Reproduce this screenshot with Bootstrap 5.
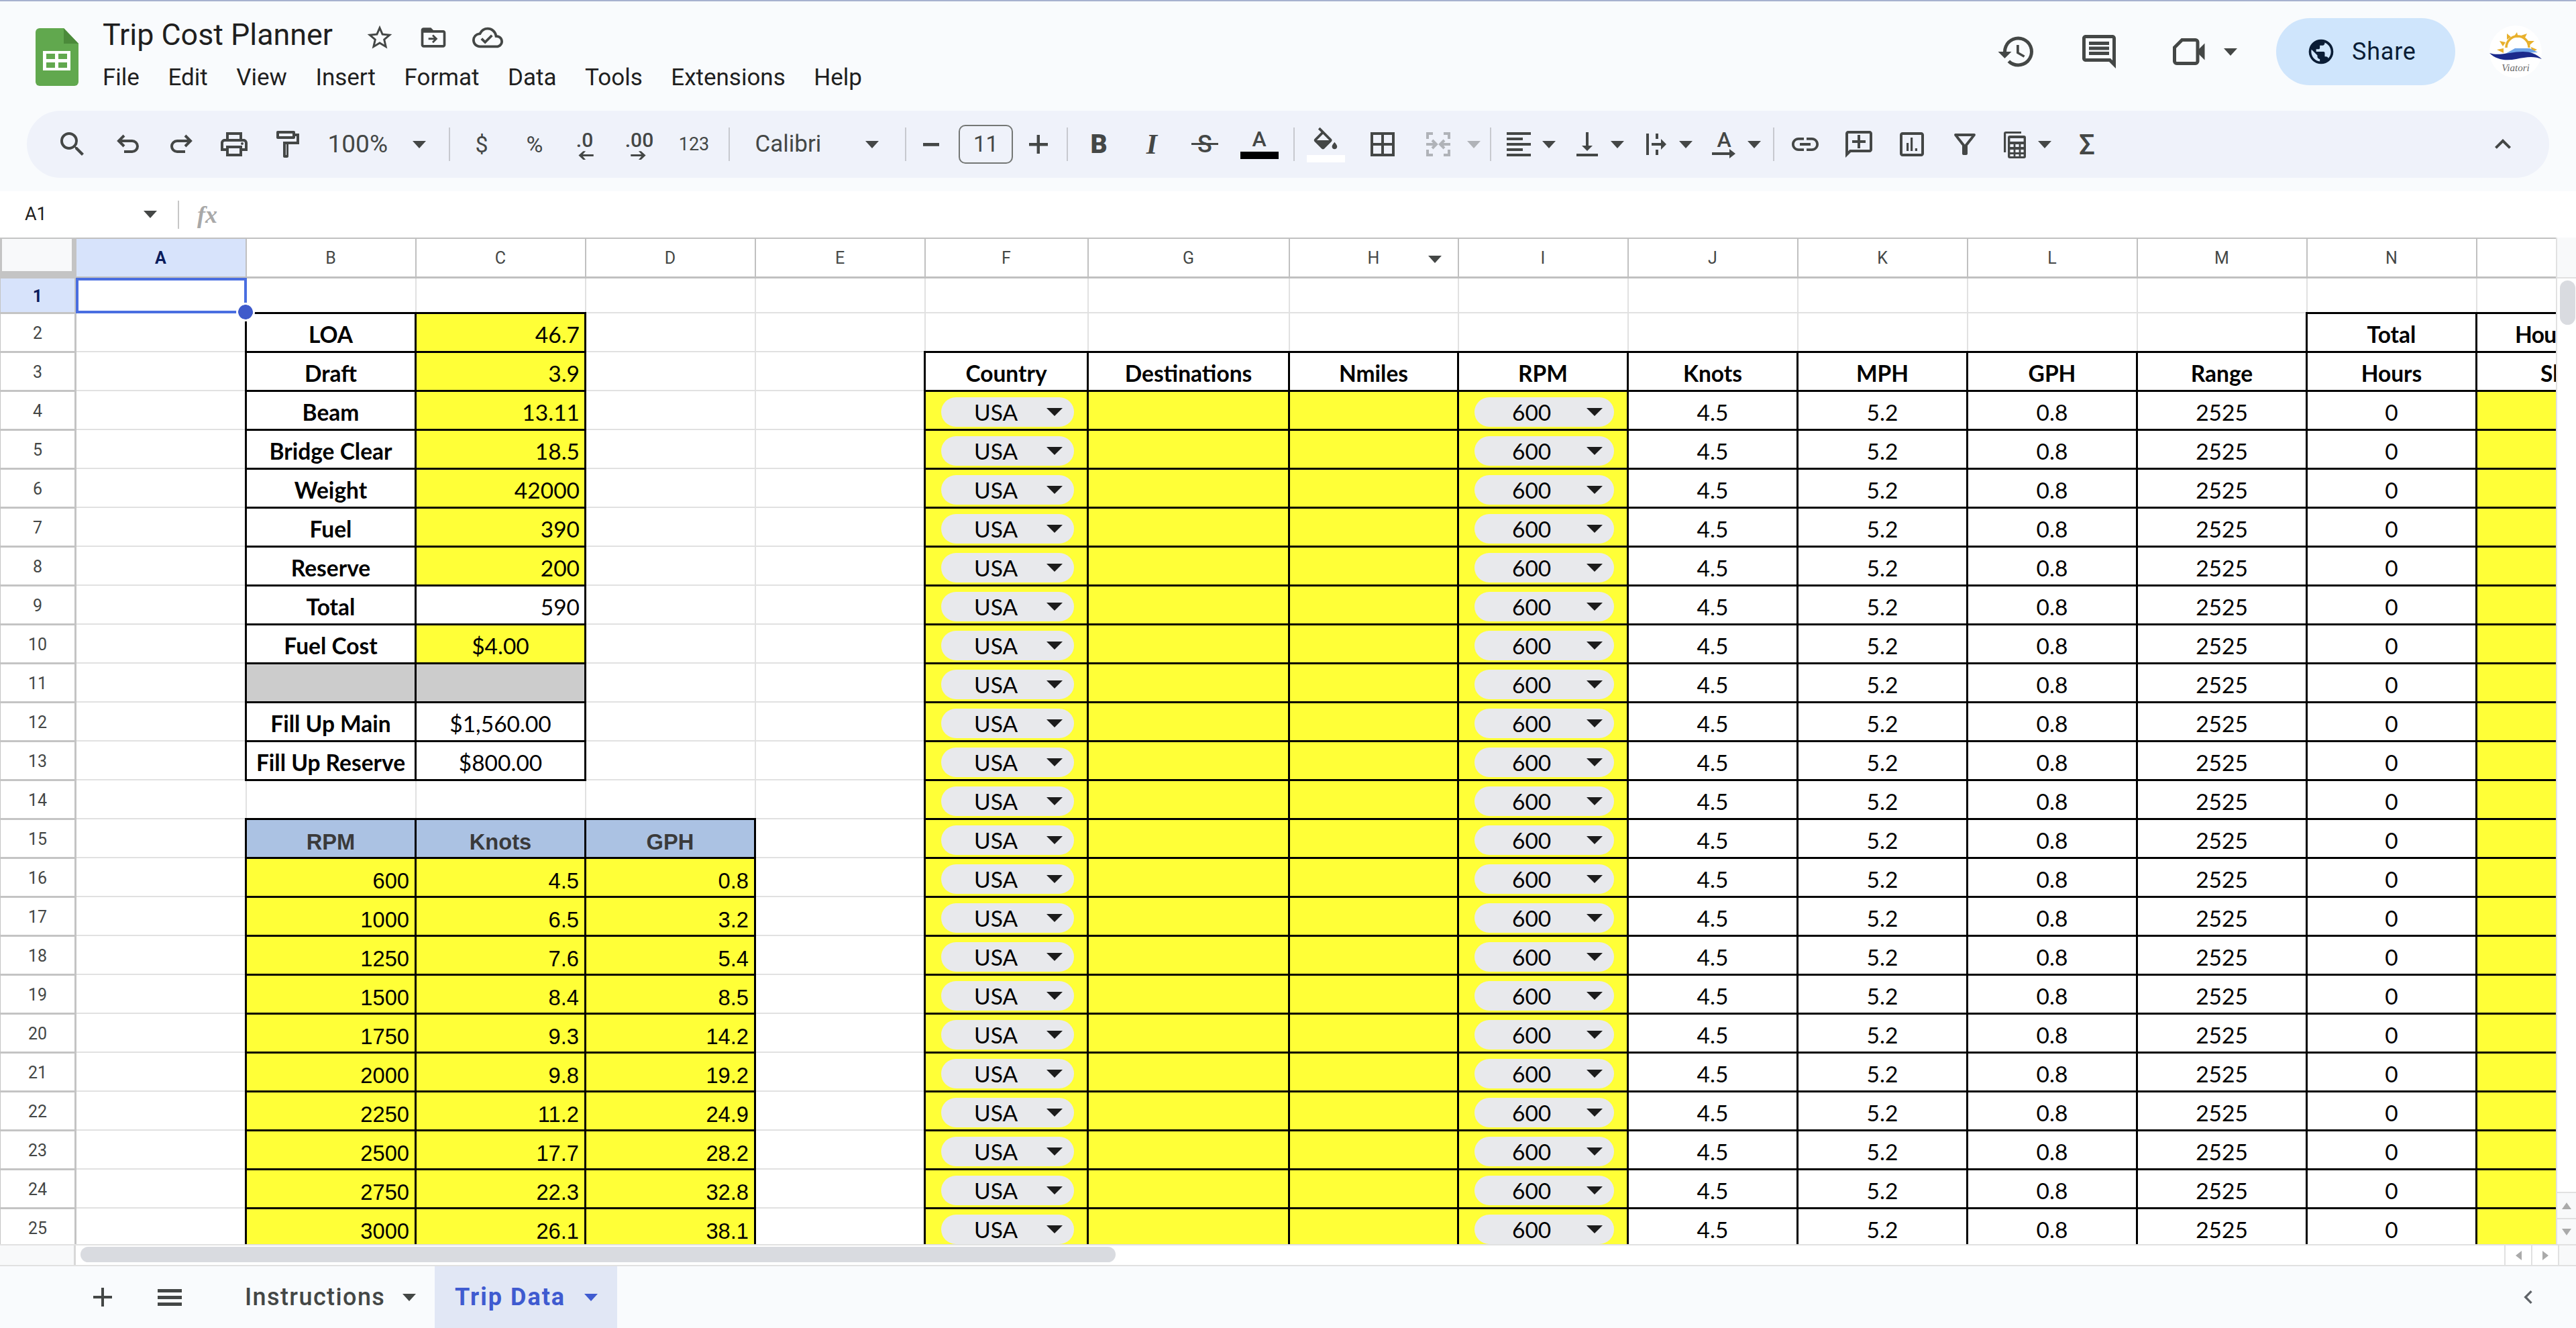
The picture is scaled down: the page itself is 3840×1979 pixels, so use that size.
<!DOCTYPE html>
<html lang="en"><head><meta charset="utf-8"><title>Trip Cost Planner</title>
<link rel="stylesheet" href="https://cdn.jsdelivr.net/npm/bootstrap@5.3.0/dist/css/bootstrap.min.css">
<style>
html,body{margin:0;height:100%;background:#fff;overflow:hidden;font-family:Roboto,"Liberation Sans",sans-serif}
.gs-app{height:1979px;width:3840px}
.gs-top{border-top:2px solid #a7b2cf;background:#f9fbfd;height:285px}
.gs-head{height:163px}
.gs-logo{margin:40px 36px 0 53px;width:64px;height:86px;flex:none}
.gs-titlecol{margin-top:25px}
.doc-title{width:391px;font-size:44.8px;line-height:50px;color:#1f1f1f;white-space:nowrap}
.hi{fill:#444746;position:relative;top:4px}
.mstar{width:44px;height:44px}
.mfold{width:44px;height:44px;margin-left:36px}
.mcloud{width:46px;height:46px;margin-left:36px}
.gs-menu{margin-top:17px;gap:42.5px;font-size:35px;line-height:44px;color:#1f1f1f}
.gs-menu .nav-link{padding:0;color:#1f1f1f}
.gs-right{margin:25px 51px 0 auto;height:100px}
.hist{width:60px;height:60px;fill:#444746}
.cmt{width:60px;height:60px;margin-left:63px;fill:#444746}
.vid{width:60px;height:60px;margin-left:75px}
.car{display:inline-block;width:0;height:0;border-left:10px solid transparent;border-right:10px solid transparent;border-top:11px solid #444746;flex:none}
.car-dim{border-top-color:#b0b3b8}
.vcar{margin-left:21px}
.share{margin-left:58px;width:267px;height:100px;background:#cfe5fc;border:0;color:#0b1d36;font-size:36px;font-weight:400;padding:0 0 0 45px;display:flex;align-items:center;gap:24px;letter-spacing:.8px}
.share svg{width:44px;height:44px;fill:#0b1d36}
.avat{width:78px;height:78px;margin-left:51px}
.tpill{margin:0 40px;height:100px;border-radius:50px;background:#eff2fa;padding:0 29.5px 0 28.5px}
.tb{display:flex;align-items:center;justify-content:center;padding:0;border:0;height:80px;flex:none;color:#444746;background:none;border-radius:0;position:relative}
.tb svg{width:48px;height:48px;fill:#444746}
.tw24{width:24px}.tw26{width:26px}.tw33{width:33px}.tw59{width:59px}.tw64{width:64px}.tw66{width:66px}.tw70{width:70px}.tw72{width:72px}.tw74{width:74px}.tw76{width:76px}.tw79{width:79px}.tw82{width:82px}.tw84{width:84px}.tw86{width:86px}.tw93{width:93px}.tw94{width:94px}.tw100{width:100px}
.gl{margin-left:12px}
.tsep{width:2px;height:50px;background:#c7c9cf;margin:0 8px;flex:none}
.tzoom{width:193px;justify-content:space-between;padding:0 26px 0 21px;font-size:37px}
.tfont{width:245px;justify-content:space-between;padding:0 31px 0 30px;font-size:35px}
.tt{font-size:34px}
.ts{font-size:27px}
.col-dec{display:flex;flex-direction:column;align-items:center;line-height:28px;font-size:30px;font-weight:500;margin-top:4px}
.tb .col-dec svg{width:28px;height:17px;fill:#444746}
.fsbox{margin-left:11.5px;width:81px;height:58px;border:2px solid #747775;border-radius:10px;display:flex;align-items:center;justify-content:center;font-size:33px;color:#444746;flex:none}
.b-ic{font-size:39px;font-weight:900}
.i-ic{font:italic 700 42px "Liberation Serif",serif}
.s-ic{font-size:36px;font-weight:500}
.s-ic::after{content:"";position:absolute;left:18px;right:18px;top:38px;height:3px;background:#444746}
.col-ic{display:flex;flex-direction:column;align-items:center}
.a-ic{font-size:32px;line-height:28px;font-weight:500}
.bar-k,.bar-w{width:57px;height:11px;margin-top:5px}
.bar-k{background:#000}.bar-w{background:#fff}
.tb .fill-ic{width:46px;height:38px}
.tb .arr-ic{width:36px;height:14px}
.sg-ic{font-size:42px;font-weight:500}
.gs-fx{height:69px;background:#fff}
.nm{margin-left:37px;width:197px;font-size:27px;color:#1f1f1f;flex:none}
.fxsep{width:2px;height:42px;background:#c7c7c7;margin-left:31px}
.fx{margin-left:27px;font:italic 700 36px "Liberation Serif",serif;color:#a8a8a8}
.gs-sheet{height:1500px}
.gs-wrap{width:3810px;overflow:hidden;flex:none}
.c113{width:113px}.c243{width:243px}.c252{width:252px}.c253{width:253px}.c254{width:254px}.c300{width:300px}
.gtbl.table{width:3945px;table-layout:fixed;margin:0 0 0 -2px;border-collapse:collapse}
.gtbl.table>:not(caption)>*>*{padding:0;border:2px solid #e1e1e1;box-shadow:none;color:#000;background:#fff;height:58px;font:33.500px/36px Lato,"Liberation Sans",sans-serif;vertical-align:bottom;padding-bottom:7px;text-align:center;overflow:visible;white-space:nowrap}
.gtbl.table>tbody>tr>th.rh{border:3px solid #c4c4c4;border-right-width:3px;font:400 25px/30px Roboto,sans-serif;color:#444746;vertical-align:middle;padding:4px 0 0}
.gtbl.table>thead>tr>th{height:58px;border:2px solid #c0c0c0;border-top:2px solid #c0c0c0;border-bottom:3px solid #c0c0c0;font:400 25px/30px Roboto,sans-serif;color:#444746;vertical-align:middle;padding:3px 0 0;position:relative}
.gtbl.table>thead>tr>th.cnr{background:#c4c4c4;vertical-align:top;border-color:#c4c4c4;padding:0}
.cnr-in{width:104px;height:48px;background:#f8f9fa;margin-left:2px}
.gtbl.table>thead>tr>th.csel,.gtbl.table>tbody>tr>th.csel{background:#d7e3fb;color:#0b1c5c;font-weight:700}
.hcar{position:absolute;right:24px;top:25px}
.gtbl.table>tbody>tr.r1>*{height:53px}
.gtbl.table>tbody>tr>td.k{border:3px solid #000}
.gtbl.table>tbody>tr>td.y{background:#ffff37}
.gtbl.table>tbody>tr>td.g{background:#ccc}
.gtbl.table>tbody>tr>td.h{background:#abc2e3;font:700 32.7px/36px "Liberation Sans",sans-serif;color:#3a3a3a;padding-bottom:4px}
.gtbl.table>tbody>tr>td.l{font-weight:700;font-size:33.500px}
.gtbl.table>tbody>tr>td.n{text-align:right;padding-right:7px}
.gtbl.table>tbody>tr>td.a{text-align:right;padding-right:8px;font:32.7px/36px "Liberation Sans",sans-serif;padding-bottom:4px}
.gtbl.table>tbody>tr>td.m{vertical-align:middle;padding-bottom:0;text-align:left}
.gtbl.table>tbody>tr>td.o1{text-align:left;padding-left:56px;letter-spacing:-.6px}
.gtbl.table>tbody>tr>td.o2{text-align:left;padding-left:94px}
.gtbl.table>tbody>tr>td.s{position:relative;padding:0}
.sel{position:absolute;inset:-1px -2px -2px -1px;border:4px solid #4a6ee0;pointer-events:none;z-index:3}
.sel-dot{position:absolute;right:-13px;bottom:-13px;width:22px;height:22px;border-radius:50%;background:#3f5bcb;outline:3px solid #fff}
.ddchip{display:flex;align-items:center;justify-content:space-between;height:44px;width:198px;margin:5px 0 0 23px;border-radius:22px;background:#e8e9ec;padding:0 19px 0 49px}
.dd2{width:208px;padding-left:56px}
.ddchip .car{border-left-width:12px;border-right-width:12px;border-top:12px solid #1c1c1c;margin-right:-2px}
.gs-vbar{width:30px;background:#fff;border-left:2px solid #e1e1e1;flex:none}
.vb-head{height:61px;background:#f8f9fa;border-bottom:2px solid #e1e1e1}
.vb-thumb{width:23px;height:66px;margin:3px 0 0 4px;border-radius:12px;background:#d9dbe0}
.vb-btn{height:39px;display:flex;align-items:center;justify-content:center;background:#f8f9fa;border-top:2px solid #e1e1e1}
.tu,.td1,.tl,.tr1{width:0;height:0;display:block}
.tu{border-left:7px solid transparent;border-right:7px solid transparent;border-bottom:10px solid #aaa}
.td1{border-left:7px solid transparent;border-right:7px solid transparent;border-top:10px solid #aaa}
.tl{border-top:7px solid transparent;border-bottom:7px solid transparent;border-right:9px solid #aaa}
.tr1{border-top:7px solid transparent;border-bottom:7px solid transparent;border-left:9px solid #aaa}
.gs-hbar{height:33px;background:#fff;border-top:2px solid #e1e1e1;border-bottom:2px solid #e1e1e1}
.hb-stub{width:113px;background:#f8f9fa;border-right:3px solid #d8d8d8;flex:none}
.hb-thumb{width:1543px;height:23px;margin:2px 0 0 7px;border-radius:12px;background:#d9dbe0}
.hb-btn{width:40px;display:flex;align-items:center;justify-content:center;background:#fff;border-left:2px solid #e1e1e1;flex:none}
.hb-end{width:27px;background:#f8f9fa;border-left:2px solid #e1e1e1;flex:none}
.gs-tabs{height:92px;background:#f9fbfd}
.tplus{width:48px;height:48px;margin-left:129px;fill:#444746}
.tmenu{width:48px;height:48px;margin-left:52px;fill:#444746}
.stab{display:flex;align-items:center;height:100%;font-size:36px;font-weight:500;color:#444746;flex:none;letter-spacing:1.4px}
.st1{margin-left:88px;width:283px;gap:26px}
.st2{width:272px;background:#e1e7f5;color:#3f5bd0;font-weight:700;padding-left:30px;gap:28px;letter-spacing:2px}
.st2 .car{border-top-color:#3f5bd0}
.tcoll{width:40px;height:48px;margin-left:auto;margin-right:51px;fill:#5f6368}
</style></head><body>
<div class="gs-app d-flex flex-column">
<header class="gs-top flex-none">
<div class="gs-head d-flex align-items-start">
<svg class="gs-logo" viewBox="0 0 64 86"><path d="M6 0h36l22 23v57a6 6 0 0 1-6 6H6a6 6 0 0 1-6-6V6a6 6 0 0 1 6-6z" fill="#61a84e"/><path d="M42 0l22 23H42z" fill="#4b8a3a"/><path d="M11 34h41v29H11z" fill="#fff"/><path d="M16 38h13v8H16zm18 0h13v8H34zM16 51h13v8H16zm18 0h13v8H34z" fill="#61a84e"/></svg>
<div class="gs-titlecol">
<div class="d-flex align-items-center">
<div class="doc-title">Trip Cost Planner</div>
<svg class="mstar hi" viewBox="0 0 24 24"><path d="M22 9.24l-7.19-.62L12 2 9.19 8.63 2 9.24l5.46 4.73L5.82 21 12 17.27 18.18 21l-1.63-7.03L22 9.24zM12 15.4l-3.76 2.27 1-4.28-3.32-2.88 4.38-.38L12 6.1l1.71 4.04 4.38.38-3.32 2.88 1 4.28L12 15.4z"/></svg>
<svg class="mfold hi" viewBox="0 0 24 24"><path d="M20 6h-8l-2-2H4c-1.1 0-2 .9-2 2v12c0 1.1.9 2 2 2h16c1.1 0 2-.9 2-2V8c0-1.1-.9-2-2-2zm0 12H4V8h16v10zM12 9.5l-1.1 1.1 1.6 1.6H8v1.6h4.500l-1.6 1.6 1.1 1.1 3.5-3.5z"/></svg>
<svg class="mcloud hi" viewBox="0 0 24 24"><path d="M19.35 10.04A7.49 7.49 0 0 0 12 4a7.49 7.49 0 0 0-6.65 4.04A6 6 0 0 0 0 14c0 3.31 2.69 6 6 6h13c2.76 0 5-2.24 5-5 0-2.64-2.05-4.78-4.65-4.96zM19 18H6c-2.21 0-4-1.79-4-4 0-2.05 1.53-3.76 3.56-3.97l1.07-.11.5-.95A5.47 5.47 0 0 1 12 6a5.5 5.5 0 0 1 5.39 4.43l.3 1.5 1.53.11A2.98 2.98 0 0 1 22 15c0 1.65-1.35 3-3 3zm-9-3.82l-2.09-2.09L6.5 13.5 10 17l6-6-1.41-1.41z"/></svg>
</div>
<nav class="nav gs-menu"><a class="nav-link" href="#">File</a><a class="nav-link" href="#">Edit</a><a class="nav-link" href="#">View</a><a class="nav-link" href="#">Insert</a><a class="nav-link" href="#">Format</a><a class="nav-link" href="#">Data</a><a class="nav-link" href="#">Tools</a><a class="nav-link" href="#">Extensions</a><a class="nav-link" href="#">Help</a></nav>
</div>
<div class="gs-right d-flex align-items-center">
<svg class="hist" viewBox="0 0 24 24"><path d="M13 3a9 9 0 0 0-9 9H1l3.89 3.89.07.14L9 12H6a7 7 0 1 1 2.05 4.95L6.63 18.37A8.96 8.96 0 0 0 13 21a9 9 0 0 0 0-18zm-1 5v5l4.28 2.54.72-1.21-3.5-2.08V8H12z"/></svg>
<svg class="cmt" viewBox="0 0 24 24"><path d="M20 2H4c-1.1 0-2 .9-2 2v12c0 1.1.9 2 2 2h14l4 4V4c0-1.1-.9-2-2-2zm0 15.17L18.83 16H4V4h16v13.17zM6 12h12v2H6zm0-3h12v2H6zm0-3h12v2H6z"/></svg>
<svg class="vid" viewBox="0 0 24 24"><path d="M7.5 5H15.500a1.3 1.3 0 0 1 1.3 1.3V17.7a1.3 1.3 0 0 1-1.3 1.3H4.300A1.3 1.3 0 0 1 3 17.700V9.500z" fill="none" stroke="#444746" stroke-width="2"/><path d="M17.500 10.500L21 7v10l-3.500-3.500z" fill="#444746"/></svg>
<span class="car vcar"></span>
<button class="btn rounded-pill share"><svg viewBox="0 0 24 24"><path d="M12 2a10 10 0 1 0 0 20 10 10 0 0 0 0-20zM4 12c0-.61.08-1.21.21-1.78L8.99 15v1c0 1.1.9 2 2 2v1.93C7.06 19.43 4 16.07 4 12zm13.89 5.4c-.26-.81-1-1.4-1.9-1.4h-1v-3c0-.55-.45-1-1-1h-6v-2h2c.55 0 1-.45 1-1V7h2c1.1 0 2-.9 2-2v-.41C17.92 5.77 20 8.65 20 12c0 2.08-.81 3.98-2.11 5.4z"/></svg>Share</button>
<svg class="avat" viewBox="0 0 78 78"><circle cx="39" cy="39" r="39" fill="#fff"/><path d="M25 33a17 17 0 0 1 34 0" fill="none" stroke="#e8b02c" stroke-width="3.5"/><path d="M41 10l-5 7 7 1zM26 12l0 9 6-4zM56 12l-9 3 5 5zM15 23l5 8 4-6zM67 23l-10 0 3 6zM11 36l10 5 0-7zM71 36l-9-4 1 8z" fill="#e8b02c"/><path d="M24 42l14-8 22 0 12 6z" fill="#6ea4e8"/><path d="M0 41c14 5 32-2 50-2 10 0 20 3 28 11-12-5-24-3-38 0-16 3-30 1-40-9z" fill="#1b2a8c"/><text x="39" y="68" text-anchor="middle" font-family="Liberation Serif,serif" font-style="italic" font-size="15" fill="#6a6a6a">Viatori</text></svg>
</div>
</div>
<div class="tpill d-flex align-items-center">
<button class="btn tb tw79"><svg viewBox="0 0 24 24"><path d="M15.5 14h-.79l-.28-.27A6.47 6.47 0 0 0 16 9.5 6.5 6.5 0 1 0 9.5 16c1.61 0 3.09-.59 4.23-1.57l.27.28v.79l5 4.99L20.49 19l-4.99-5zm-6 0C7.01 14 5 11.99 5 9.5S7.01 5 9.5 5 14 7.01 14 9.5 11.99 14 9.5 14z"/></svg></button>
<button class="btn tb tw79 ms-1"><svg viewBox="0 0 24 24"><path d="M9 5.500L5 9.500l4 4M5.500 9.500H15a4 4 0 0 1 0 8H9" fill="none" stroke="#444746" stroke-width="2"/></svg></button>
<button class="btn tb tw79"><svg viewBox="0 0 24 24"><path d="M15 5.500l4 4-4 4M18.500 9.500H9a4 4 0 0 0 0 8h6" fill="none" stroke="#444746" stroke-width="2"/></svg></button>
<button class="btn tb tw79"><svg viewBox="0 0 24 24"><path d="M19 8h-1V3H6v5H5c-1.66 0-3 1.34-3 3v6h4v4h12v-4h4v-6c0-1.66-1.34-3-3-3zM8 5h8v3H8V5zm8 12v2H8v-4h8v2zm2-2v-2H6v2H4v-4c0-.55.45-1 1-1h14c.55 0 1 .45 1 1v4h-2z"/><circle cx="18" cy="11.500" r="1"/></svg></button>
<button class="btn tb tw79"><svg viewBox="0 0 24 24"><path fill-rule="evenodd" d="M18 4V3c0-.55-.45-1-1-1H5c-.55 0-1 .45-1 1v4c0 .55.45 1 1 1h12c.55 0 1-.45 1-1V6h1v4H9v11c0 .55.45 1 1 1h2c.55 0 1-.45 1-1v-9h8V4h-3zm-2 2H6V4h10v2zM11 12h.5v8h-.5z"/></svg></button>
<button class="btn tb tzoom"><span>100%</span><span class="car"></span></button>
<span class="tsep"></span>
<button class="btn tb tw79 tt">$</button>
<button class="btn tb tw79 tt">%</button>
<button class="btn tb tw70"><span class="col-dec">.0<svg viewBox="0 0 24 16"><path d="M24 6.500H9l4-4.500H9.500L3 8l6.500 6H13L9 9.500h15z"/></svg></span></button>
<button class="btn tb tw93"><span class="col-dec">.00<svg viewBox="0 0 24 16"><path d="M0 6.500h15L11 2h3.500L21 8l-6.500 6H11l4-4.500H0z"/></svg></span></button>
<button class="btn tb tw70 ts">123</button>
<span class="tsep ms-3"></span>
<button class="btn tb tfont"><span>Calibri</span><span class="car"></span></button>
<span class="tsep"></span>
<button class="btn tb tw59"><svg viewBox="0 0 24 24"><path d="M6 11h12v2.400H6z"/></svg></button>
<div class="fsbox">11</div>
<button class="btn tb tw76"><svg viewBox="0 0 24 24"><path d="M19 13.200h-6V19h-2.200v-5.800H5V11h5.800V5H13v6h6z"/></svg></button>
<span class="tsep ms-1"></span>
<button class="btn tb tw76 b-ic">B</button>
<button class="btn tb tw82 i-ic">I</button>
<button class="btn tb tw76 s-ic">S</button>
<button class="btn tb tw86"><span class="col-ic"><span class="a-ic">A</span><span class="bar-k"></span></span></button>
<span class="tsep"></span>
<button class="btn tb tw76"><span class="col-ic"><svg class="fill-ic" viewBox="0 0 24 18"><path d="M16.56 8.94L7.62 0 6.21 1.41l2.38 2.38-5.15 5.15c-.59.59-.59 1.54 0 2.12l5.5 5.5c.29.29.68.44 1.06.44s.77-.15 1.06-.44l5.5-5.5c.59-.58.59-1.53 0-2.12zM5.21 10L10 5.21 14.79 10H5.21zM19 11.5s-2 2.17-2 3.5c0 1.1.9 2 2 2s2-.9 2-2c0-1.33-2-3.5-2-3.5z"/></svg><span class="bar-w"></span></span></button>
<button class="btn tb tw94"><svg viewBox="0 0 24 24"><path d="M3 3v18h18V3H3zm8 16H5v-6h6v6zm0-8H5V5h6v6zm8 8h-6v-6h6v6zm0-8h-6V5h6v6z"/></svg></button>
<button class="btn tb tw72"><svg viewBox="0 0 24 24"><path d="M8 4H4v4M16 4h4v4M8 20H4v-4M16 20h4v-4" fill="none" stroke="#b0b3b8" stroke-width="2"/><path d="M3 12h7M7.500 9l3 3-3 3M21 12h-7M16.500 9l-3 3 3 3" fill="none" stroke="#b0b3b8" stroke-width="2"/></svg></button>
<button class="btn tb tw33"><span class="car car-dim"></span></button>
<span class="tsep"></span>
<button class="btn tb tw66"><svg viewBox="0 0 24 24"><path d="M15 15H3v2h12v-2zm0-8H3v2h12V7zM3 13h18v-2H3v2zm0 8h18v-2H3v2zM3 3v2h18V3H3z"/></svg></button>
<button class="btn tb tw24"><span class="car"></span></button>
<button class="btn tb tw66 gl"><svg viewBox="0 0 24 24"><path d="M16 13h-3V3h-2v10H8l4 4 4-4zM4 19v2h16v-2H4z"/></svg></button>
<button class="btn tb tw24"><span class="car"></span></button>
<button class="btn tb tw66 gl"><svg viewBox="0 0 24 24"><path d="M5 4h2v16H5zM12 4h2v4h-2zM12 16h2v4h-2zM9 11h7V8l4 4-4 4v-3H9z"/></svg></button>
<button class="btn tb tw24"><span class="car"></span></button>
<button class="btn tb tw66 gl"><span class="col-ic"><span class="a-ic">A</span><svg class="arr-ic" viewBox="0 0 36 14"><path d="M0 5h26V0l9 7-9 7V9H0z"/></svg></span></button>
<button class="btn tb tw24"><span class="car"></span></button>
<span class="tsep ms-3"></span>
<button class="btn tb tw76"><svg viewBox="0 0 24 24"><path d="M3.9 12c0-1.71 1.39-3.1 3.1-3.1h4V7H7c-2.76 0-5 2.24-5 5s2.24 5 5 5h4v-1.9H7c-1.71 0-3.1-1.39-3.1-3.1zM8 13h8v-2H8v2zm9-6h-4v1.9h4c1.71 0 3.1 1.39 3.1 3.1s-1.39 3.1-3.1 3.1h-4V17h4c2.76 0 5-2.24 5-5s-2.24-5-5-5z"/></svg></button>
<button class="btn tb tw84"><svg viewBox="0 0 24 24"><path d="M20 2H4c-1.1 0-2 .9-2 2v18l4-4h14c1.1 0 2-.9 2-2V4c0-1.1-.9-2-2-2zm0 14H5.17L4 17.17V4h16v12zM13 5h-2v4H7v2h4v4h2v-4h4V9h-4z"/></svg></button>
<button class="btn tb tw74"><svg viewBox="0 0 24 24"><path d="M19 3H5c-1.1 0-2 .9-2 2v14c0 1.1.9 2 2 2h14c1.1 0 2-.9 2-2V5c0-1.1-.9-2-2-2zm0 16H5V5h14v14zM8 11h1.6v6H8zm3-4h1.6v10H11zm3.4 8h1.6v2h-1.6z"/></svg></button>
<button class="btn tb tw84"><svg viewBox="0 0 24 24"><path d="M7 6h10l-5.01 6.3L7 6zm-2.75-.39C6.27 8.2 10 13 10 13v6c0 .55.45 1 1 1h2c.55 0 1-.45 1-1v-6s3.72-4.8 5.74-7.39A.998.998 0 0 0 18.95 4H5.04c-.83 0-1.3.95-.79 1.61z"/></svg></button>
<button class="btn tb tw64"><svg viewBox="0 0 24 24"><path d="M4 18V4a1.500 1.500 0 0 1 1.500-1.500H17V4H5.600v14zM8.500 5.500H19A1.500 1.500 0 0 1 20.500 7v14a1.500 1.500 0 0 1-1.500 1.500H8.500A1.500 1.500 0 0 1 7 21V7a1.500 1.500 0 0 1 1.500-1.500zm.2 2V10h10.100V7.500zM8.700 12v2h2.600v-2zm4 0v2h2.600v-2zm4 0v2h2.100v-2zm-8 4v2h2.600v-2zm4 0v2h2.600v-2zm4 0v2h2.100v-2zm-8 3.500v1.500h2.600v-1.500zm4 0v1.500h2.600v-1.500zm4 0v1.500h2.100v-1.500z" fill-rule="evenodd"/></svg></button>
<button class="btn tb tw26"><span class="car"></span></button>
<button class="btn tb tw100 sg-ic">Σ</button>
<button class="btn tb tw79 ms-auto"><svg viewBox="0 0 24 24"><path d="M7.410 15.410L12 10.830l4.590 4.580L18 14l-6-6-6 6z"/></svg></button>
</div>
</header>
<div class="gs-fx d-flex align-items-center"><span class="nm d-flex justify-content-between align-items-center">A1<span class="car"></span></span><span class="fxsep"></span><span class="fx">fx</span></div>
<main class="gs-sheet d-flex">
<div class="gs-wrap">
<table class="table table-bordered gtbl">
<colgroup><col class="c113"><col class="c254"><col class="c253"><col class="c253"><col class="c253"><col class="c253"><col class="c243"><col class="c300"><col class="c252"><col class="c253"><col class="c253"><col class="c253"><col class="c253"><col class="c253"><col class="c253"><col class="c253"></colgroup>
<thead><tr><th class="cnr"><div class="cnr-in"></div></th><th class="csel">A</th><th>B</th><th>C</th><th>D</th><th>E</th><th>F</th><th>G</th><th>H<span class="car hcar"></span></th><th>I</th><th>J</th><th>K</th><th>L</th><th>M</th><th>N</th><th></th></tr></thead>
<tbody>
<tr class="r1"><th class="rh csel">1</th><td class="s"><div class="sel"><div class="sel-dot"></div></div></td><td></td><td></td><td></td><td></td><td></td><td></td><td></td><td></td><td></td><td></td><td></td><td></td><td></td><td></td></tr>
<tr><th class="rh">2</th><td></td><td class="k l">LOA</td><td class="k y n">46.7</td><td></td><td></td><td></td><td></td><td></td><td></td><td></td><td></td><td></td><td></td><td class="k l">Total</td><td class="k l o1">Hours</td></tr>
<tr><th class="rh">3</th><td></td><td class="k l">Draft</td><td class="k y n">3.9</td><td></td><td></td><td class="k l">Country</td><td class="k l">Destinations</td><td class="k l">Nmiles</td><td class="k l">RPM</td><td class="k l">Knots</td><td class="k l">MPH</td><td class="k l">GPH</td><td class="k l">Range</td><td class="k l">Hours</td><td class="k l o2">Sleep</td></tr>
<tr><th class="rh">4</th><td></td><td class="k l">Beam</td><td class="k y n">13.11</td><td></td><td></td><td class="k y m"><span class="ddchip">USA<span class="car"></span></span></td><td class="k y"></td><td class="k y"></td><td class="k y m"><span class="ddchip dd2">600<span class="car"></span></span></td><td class="k">4.5</td><td class="k">5.2</td><td class="k">0.8</td><td class="k">2525</td><td class="k">0</td><td class="k y"></td></tr>
<tr><th class="rh">5</th><td></td><td class="k l">Bridge Clear</td><td class="k y n">18.5</td><td></td><td></td><td class="k y m"><span class="ddchip">USA<span class="car"></span></span></td><td class="k y"></td><td class="k y"></td><td class="k y m"><span class="ddchip dd2">600<span class="car"></span></span></td><td class="k">4.5</td><td class="k">5.2</td><td class="k">0.8</td><td class="k">2525</td><td class="k">0</td><td class="k y"></td></tr>
<tr><th class="rh">6</th><td></td><td class="k l">Weight</td><td class="k y n">42000</td><td></td><td></td><td class="k y m"><span class="ddchip">USA<span class="car"></span></span></td><td class="k y"></td><td class="k y"></td><td class="k y m"><span class="ddchip dd2">600<span class="car"></span></span></td><td class="k">4.5</td><td class="k">5.2</td><td class="k">0.8</td><td class="k">2525</td><td class="k">0</td><td class="k y"></td></tr>
<tr><th class="rh">7</th><td></td><td class="k l">Fuel</td><td class="k y n">390</td><td></td><td></td><td class="k y m"><span class="ddchip">USA<span class="car"></span></span></td><td class="k y"></td><td class="k y"></td><td class="k y m"><span class="ddchip dd2">600<span class="car"></span></span></td><td class="k">4.5</td><td class="k">5.2</td><td class="k">0.8</td><td class="k">2525</td><td class="k">0</td><td class="k y"></td></tr>
<tr><th class="rh">8</th><td></td><td class="k l">Reserve</td><td class="k y n">200</td><td></td><td></td><td class="k y m"><span class="ddchip">USA<span class="car"></span></span></td><td class="k y"></td><td class="k y"></td><td class="k y m"><span class="ddchip dd2">600<span class="car"></span></span></td><td class="k">4.5</td><td class="k">5.2</td><td class="k">0.8</td><td class="k">2525</td><td class="k">0</td><td class="k y"></td></tr>
<tr><th class="rh">9</th><td></td><td class="k l">Total</td><td class="k n">590</td><td></td><td></td><td class="k y m"><span class="ddchip">USA<span class="car"></span></span></td><td class="k y"></td><td class="k y"></td><td class="k y m"><span class="ddchip dd2">600<span class="car"></span></span></td><td class="k">4.5</td><td class="k">5.2</td><td class="k">0.8</td><td class="k">2525</td><td class="k">0</td><td class="k y"></td></tr>
<tr><th class="rh">10</th><td></td><td class="k l">Fuel Cost</td><td class="k y">$4.00</td><td></td><td></td><td class="k y m"><span class="ddchip">USA<span class="car"></span></span></td><td class="k y"></td><td class="k y"></td><td class="k y m"><span class="ddchip dd2">600<span class="car"></span></span></td><td class="k">4.5</td><td class="k">5.2</td><td class="k">0.8</td><td class="k">2525</td><td class="k">0</td><td class="k y"></td></tr>
<tr><th class="rh">11</th><td></td><td class="k g"></td><td class="k g"></td><td></td><td></td><td class="k y m"><span class="ddchip">USA<span class="car"></span></span></td><td class="k y"></td><td class="k y"></td><td class="k y m"><span class="ddchip dd2">600<span class="car"></span></span></td><td class="k">4.5</td><td class="k">5.2</td><td class="k">0.8</td><td class="k">2525</td><td class="k">0</td><td class="k y"></td></tr>
<tr><th class="rh">12</th><td></td><td class="k l">Fill Up Main</td><td class="k">$1,560.00</td><td></td><td></td><td class="k y m"><span class="ddchip">USA<span class="car"></span></span></td><td class="k y"></td><td class="k y"></td><td class="k y m"><span class="ddchip dd2">600<span class="car"></span></span></td><td class="k">4.5</td><td class="k">5.2</td><td class="k">0.8</td><td class="k">2525</td><td class="k">0</td><td class="k y"></td></tr>
<tr><th class="rh">13</th><td></td><td class="k l">Fill Up Reserve</td><td class="k">$800.00</td><td></td><td></td><td class="k y m"><span class="ddchip">USA<span class="car"></span></span></td><td class="k y"></td><td class="k y"></td><td class="k y m"><span class="ddchip dd2">600<span class="car"></span></span></td><td class="k">4.5</td><td class="k">5.2</td><td class="k">0.8</td><td class="k">2525</td><td class="k">0</td><td class="k y"></td></tr>
<tr><th class="rh">14</th><td></td><td></td><td></td><td></td><td></td><td class="k y m"><span class="ddchip">USA<span class="car"></span></span></td><td class="k y"></td><td class="k y"></td><td class="k y m"><span class="ddchip dd2">600<span class="car"></span></span></td><td class="k">4.5</td><td class="k">5.2</td><td class="k">0.8</td><td class="k">2525</td><td class="k">0</td><td class="k y"></td></tr>
<tr><th class="rh">15</th><td></td><td class="k h">RPM</td><td class="k h">Knots</td><td class="k h">GPH</td><td></td><td class="k y m"><span class="ddchip">USA<span class="car"></span></span></td><td class="k y"></td><td class="k y"></td><td class="k y m"><span class="ddchip dd2">600<span class="car"></span></span></td><td class="k">4.5</td><td class="k">5.2</td><td class="k">0.8</td><td class="k">2525</td><td class="k">0</td><td class="k y"></td></tr>
<tr><th class="rh">16</th><td></td><td class="k y a">600</td><td class="k y a">4.5</td><td class="k y a">0.8</td><td></td><td class="k y m"><span class="ddchip">USA<span class="car"></span></span></td><td class="k y"></td><td class="k y"></td><td class="k y m"><span class="ddchip dd2">600<span class="car"></span></span></td><td class="k">4.5</td><td class="k">5.2</td><td class="k">0.8</td><td class="k">2525</td><td class="k">0</td><td class="k y"></td></tr>
<tr><th class="rh">17</th><td></td><td class="k y a">1000</td><td class="k y a">6.5</td><td class="k y a">3.2</td><td></td><td class="k y m"><span class="ddchip">USA<span class="car"></span></span></td><td class="k y"></td><td class="k y"></td><td class="k y m"><span class="ddchip dd2">600<span class="car"></span></span></td><td class="k">4.5</td><td class="k">5.2</td><td class="k">0.8</td><td class="k">2525</td><td class="k">0</td><td class="k y"></td></tr>
<tr><th class="rh">18</th><td></td><td class="k y a">1250</td><td class="k y a">7.6</td><td class="k y a">5.4</td><td></td><td class="k y m"><span class="ddchip">USA<span class="car"></span></span></td><td class="k y"></td><td class="k y"></td><td class="k y m"><span class="ddchip dd2">600<span class="car"></span></span></td><td class="k">4.5</td><td class="k">5.2</td><td class="k">0.8</td><td class="k">2525</td><td class="k">0</td><td class="k y"></td></tr>
<tr><th class="rh">19</th><td></td><td class="k y a">1500</td><td class="k y a">8.4</td><td class="k y a">8.5</td><td></td><td class="k y m"><span class="ddchip">USA<span class="car"></span></span></td><td class="k y"></td><td class="k y"></td><td class="k y m"><span class="ddchip dd2">600<span class="car"></span></span></td><td class="k">4.5</td><td class="k">5.2</td><td class="k">0.8</td><td class="k">2525</td><td class="k">0</td><td class="k y"></td></tr>
<tr><th class="rh">20</th><td></td><td class="k y a">1750</td><td class="k y a">9.3</td><td class="k y a">14.2</td><td></td><td class="k y m"><span class="ddchip">USA<span class="car"></span></span></td><td class="k y"></td><td class="k y"></td><td class="k y m"><span class="ddchip dd2">600<span class="car"></span></span></td><td class="k">4.5</td><td class="k">5.2</td><td class="k">0.8</td><td class="k">2525</td><td class="k">0</td><td class="k y"></td></tr>
<tr><th class="rh">21</th><td></td><td class="k y a">2000</td><td class="k y a">9.8</td><td class="k y a">19.2</td><td></td><td class="k y m"><span class="ddchip">USA<span class="car"></span></span></td><td class="k y"></td><td class="k y"></td><td class="k y m"><span class="ddchip dd2">600<span class="car"></span></span></td><td class="k">4.5</td><td class="k">5.2</td><td class="k">0.8</td><td class="k">2525</td><td class="k">0</td><td class="k y"></td></tr>
<tr><th class="rh">22</th><td></td><td class="k y a">2250</td><td class="k y a">11.2</td><td class="k y a">24.9</td><td></td><td class="k y m"><span class="ddchip">USA<span class="car"></span></span></td><td class="k y"></td><td class="k y"></td><td class="k y m"><span class="ddchip dd2">600<span class="car"></span></span></td><td class="k">4.5</td><td class="k">5.2</td><td class="k">0.8</td><td class="k">2525</td><td class="k">0</td><td class="k y"></td></tr>
<tr><th class="rh">23</th><td></td><td class="k y a">2500</td><td class="k y a">17.7</td><td class="k y a">28.2</td><td></td><td class="k y m"><span class="ddchip">USA<span class="car"></span></span></td><td class="k y"></td><td class="k y"></td><td class="k y m"><span class="ddchip dd2">600<span class="car"></span></span></td><td class="k">4.5</td><td class="k">5.2</td><td class="k">0.8</td><td class="k">2525</td><td class="k">0</td><td class="k y"></td></tr>
<tr><th class="rh">24</th><td></td><td class="k y a">2750</td><td class="k y a">22.3</td><td class="k y a">32.8</td><td></td><td class="k y m"><span class="ddchip">USA<span class="car"></span></span></td><td class="k y"></td><td class="k y"></td><td class="k y m"><span class="ddchip dd2">600<span class="car"></span></span></td><td class="k">4.5</td><td class="k">5.2</td><td class="k">0.8</td><td class="k">2525</td><td class="k">0</td><td class="k y"></td></tr>
<tr><th class="rh">25</th><td></td><td class="k y a">3000</td><td class="k y a">26.1</td><td class="k y a">38.1</td><td></td><td class="k y m"><span class="ddchip">USA<span class="car"></span></span></td><td class="k y"></td><td class="k y"></td><td class="k y m"><span class="ddchip dd2">600<span class="car"></span></span></td><td class="k">4.5</td><td class="k">5.2</td><td class="k">0.8</td><td class="k">2525</td><td class="k">0</td><td class="k y"></td></tr>
</tbody></table>
</div>
<aside class="gs-vbar d-flex flex-column"><div class="vb-head"></div><div class="vb-thumb"></div><div class="vb-btn mt-auto"><span class="tu"></span></div><div class="vb-btn"><span class="td1"></span></div></aside>
</main>
<div class="gs-hbar d-flex"><div class="hb-stub"></div><div class="hb-thumb"></div><div class="hb-btn ms-auto"><span class="tl"></span></div><div class="hb-btn"><span class="tr1"></span></div><div class="hb-end"></div></div>
<footer class="gs-tabs d-flex align-items-center">
<svg class="tplus" viewBox="0 0 24 24"><path d="M19 13h-6v6h-2v-6H5v-2h6V5h2v6h6z"/></svg>
<svg class="tmenu" viewBox="0 0 24 24"><path d="M3 6h18v2.500H3zm0 5h18v2.500H3zm0 5h18v2.500H3z"/></svg>
<div class="stab st1">Instructions<span class="car"></span></div>
<div class="stab st2">Trip Data<span class="car"></span></div>
<svg class="tcoll" viewBox="0 0 24 24"><path d="M15.410 7.410L14 6l-6 6 6 6 1.410-1.410L10.830 12z"/></svg>
</footer>
</div>
<script src="https://cdn.jsdelivr.net/npm/bootstrap@5.3.0/dist/js/bootstrap.bundle.min.js"></script>
</body></html>
